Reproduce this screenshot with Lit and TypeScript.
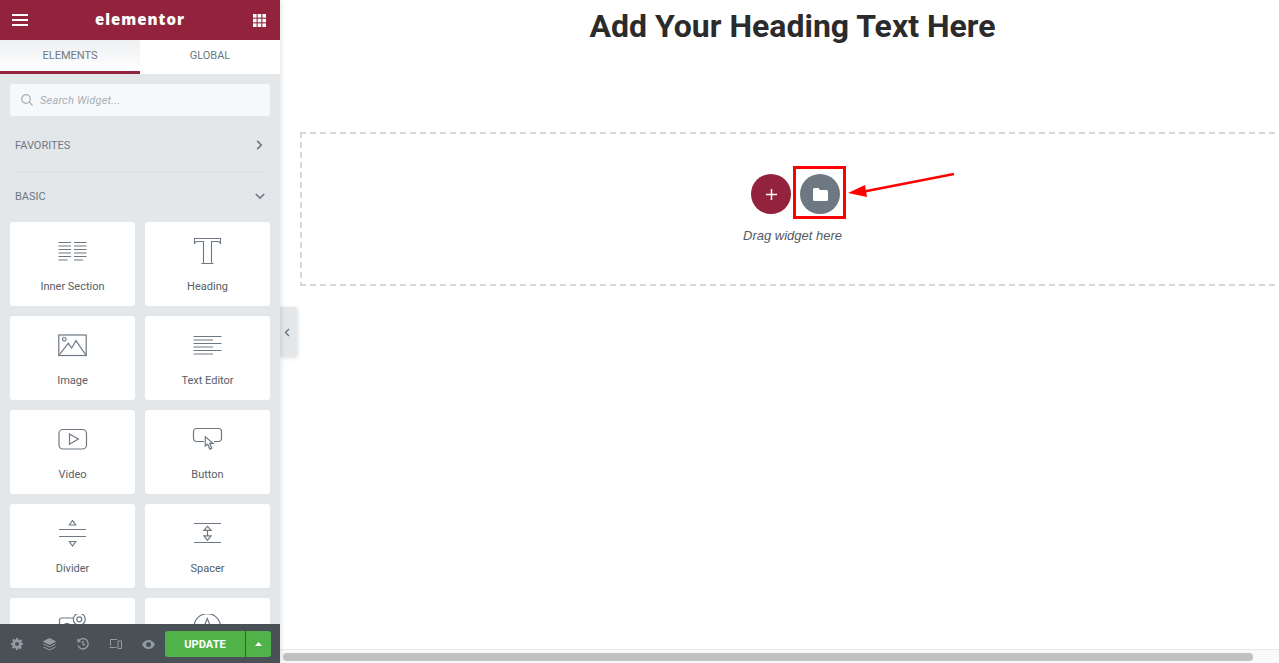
import { LitElement, html, css, svg } from "lit";
import { customElement } from "lit/decorators.js";

const s = "#6d7882";
const rowsY = [4.5, 8, 11.5, 15, 18.5];
const icons: Record<string, unknown> = {
  inner: svg`<g stroke="${s}" stroke-width="1.200" fill="none">${rowsY.map((y) => svg`<path d="M14.500 ${y}h12.500M30 ${y}h12.500"/>`)}<path d="M14.500 22h9M30 22h9"/></g>`,
  heading: svg`<path d="M15.500 6V.5h26V6M15.500 6c0-2 1-2.500 3-2.500h6v22h-2M41.500 6c0-2-1-2.500-3-2.500h-6v22h2M22.500 25.500h12" fill="none" stroke="${s}" stroke-width="1.100"/>`,
  image: svg`<g fill="none" stroke="${s}" stroke-width="1.200"><rect x="14.800" y="3" width="27.400" height="20.500"/><circle cx="20.300" cy="7.300" r="1.800"/><path d="M14.800 23.500l9.500-12.200 3.400 4.700 4.300-7.300 10.200 14.800"/></g>`,
  text: svg`<g stroke="${s}" stroke-width="1.200" fill="none"><path d="M14.500 4.500h28M14.500 8h19.500M14.500 11.500h28M14.500 15h19.500M14.500 18.500h28M14.500 22h19.500"/></g>`,
  video: svg`<g fill="none" stroke="${s}" stroke-width="1.200"><rect x="15" y="3.500" width="27.500" height="19.500" rx="4"/><path d="M25.500 8v10.200l8.800-5.100z"/></g>`,
  button: svg`<g fill="none" stroke="${s}" stroke-width="1.200"><path d="M25 15.500h-7.500a3 3 0 0 1-3-3v-7a3 3 0 0 1 3-3h22a3 3 0 0 1 3 3v7a3 3 0 0 1-3 3H35"/><path d="M26.300 10.800v9.200l2.400-1.900 2.100 5 2-.9-2.100-4.900h3.400z" fill="#fff"/></g>`,
  divider: svg`<g fill="none" stroke="${s}" stroke-width="1.200"><path d="M15 9.500h27M15 16.500h27M25.300 5l3.200-4.500 3.200 4.500zM25.300 21.500l3.200 4.500 3.200-4.500z"/></g>`,
  spacer: svg`<g fill="none" stroke="${s}" stroke-width="1.200"><path d="M15 3.500h27M15 22.500h27M28.500 6.300l-3.600 4h7.200zM28.500 20.300l-3.600-4.500h7.200zM28.500 10.300v5.500"/></g>`,
  social: svg`<g fill="none" stroke="${s}" stroke-width="1.200"><path d="M29.500 4H17.500a2 2 0 0 0-2 2v10"/><path d="M21 9.500h3.500v7M21 9.500v2.500h3.500"/><circle cx="35.300" cy="5.300" r="6"/><circle cx="35.300" cy="5.300" r="2.500"/></g>`,
  star: svg`<g fill="none" stroke="${s}" stroke-width="1.200"><circle cx="28.300" cy="13" r="13.300"/><path d="M28.300 4.500l-4 10h8z"/></g>`,
};

const widgets = [
  ["Inner Section", "inner"],
  ["Heading", "heading"],
  ["Image", "image"],
  ["Text Editor", "text"],
  ["Video", "video"],
  ["Button", "button"],
  ["Divider", "divider"],
  ["Spacer", "spacer"],
  ["", "social"],
  ["", "star"],
] as const;

@customElement("app-root")
export class AppRoot extends LitElement {
  static styles = css`
    :host { display: block; width: 1279px; height: 663px; overflow: hidden; position: relative; background: #fff; font-family: Roboto, "Liberation Sans", sans-serif; }
    * { box-sizing: border-box; }
    .page { display: flex; height: 663px; }
    .panel { width: 280px; height: 663px; flex: none; background: #e4e7ea; display: flex; flex-direction: column; position: relative; box-shadow: 1px 0 5px rgba(0,0,0,.12); z-index: 2; }
    .top { height: 40px; flex: none; background: #93223c; display: flex; align-items: center; justify-content: space-between; padding: 0 14px 0 12px; color: #fff; }
    .logo { font-family: "Open Sans", Roboto, sans-serif; font-size: 15px; font-weight: 800; letter-spacing: 1px; line-height: 36px; padding-bottom: 2px; margin-left: -1px; }
    .tabs { height: 34px; flex: none; display: flex; background: #fff; }
    .tab { flex: 1; text-align: center; font-size: 11px; line-height: 31px; color: #6d7882; }
    .tab.on { background: linear-gradient(#edeff1, #fff); border-bottom: 3px solid #93223c; }
    .scroll { flex: 1; min-height: 0; overflow: hidden; padding: 10px 10px 0; }
    .search { height: 32px; background: #f7f8fa; border-radius: 3px; display: flex; align-items: center; gap: 7px; padding-left: 11px; font-size: 11px; letter-spacing: .2px; font-style: italic; color: #a4afb7; }
    .cat { display: flex; justify-content: space-between; align-items: center; padding: 0 5px; font-size: 11px; color: #6d7882; height: 14px; }
    .cat.fav { margin-top: 22px; }
    .rule { height: 2px; background: #dfe2e5; margin: 19px 5px 0 5px; }
    .cat.basic { margin-top: 16px; }
    .grid { display: grid; grid-template-columns: 125px 125px; grid-auto-rows: 84px; gap: 10px; margin-top: 19px; }
    .card { background: #fff; border-radius: 3px; display: flex; flex-direction: column; align-items: center; position: relative; }
    .ico { display: block; width: 57px; height: 30px; margin-top: 16px; }
    .label { position: absolute; top: 58px; left: 0; right: 0; text-align: center; font-size: 11px; line-height: 13px; color: #556068; }
    .foot { position: absolute; left: 0; right: 0; bottom: 0; height: 39px; background: #495157; display: flex; align-items: center; padding-top: 1px; }
    .tool { width: 33px; height: 38px; display: flex; align-items: center; justify-content: center; flex: none; }
    .tools { display: flex; width: 165px; }
    .update { height: 26px; width: 106px; display: flex; background: #4fb34a; border-radius: 3px; color: #fff; }
    .update b { width: 81px; text-align: center; font-size: 11px; font-weight: 700; line-height: 27px; letter-spacing: .1px; border-right: 1px solid #495157; }
    .update i { flex: 1; display: flex; align-items: center; justify-content: center; }
    .handle { position: absolute; left: 280px; top: 307px; width: 17px; height: 50px; padding-right: 3px; background: #e4e7ea; border-radius: 0 3px 3px 0; box-shadow: 1px 1px 4px rgba(0,0,0,.12); display: flex; align-items: center; justify-content: center; z-index: 1; }
    .main { flex: 1; min-width: 0; position: relative; display: flex; flex-direction: column; overflow: hidden; }
    .content { width: 985px; margin-left: 20px; flex: none; }
    h1 { margin: 0; height: 132px; padding-top: 8px; text-align: center; font-size: 32px; line-height: 36px; font-weight: 700; color: #2b2b2b; white-space: nowrap; }
    .drop {
      height: 154px; display: flex; flex-direction: column; align-items: center; padding-top: 42px;
      background-image:
        repeating-linear-gradient(90deg, #d5d8dc 0 6px, transparent 6px 9.99px),
        repeating-linear-gradient(90deg, #d5d8dc 0 6px, transparent 6px 9.99px),
        repeating-linear-gradient(180deg, #d5d8dc 0 6px, transparent 6px 10px);
      background-size: 975px 2px, 975px 2px, 2px 154px;
      background-position: 0 0, 0 100%, 0 0;
      background-repeat: no-repeat;
    }
    .btns { display: flex; gap: 9px; margin-left: 6px; }
    .round { width: 40px; height: 40px; border-radius: 50%; display: flex; align-items: center; justify-content: center; }
    .add { background: #93223c; }
    .tpl { background: #6d7882; }
    .hint { margin-top: 14px; font-size: 13px; font-style: italic; line-height: 15px; color: #54595f; font-family: "Liberation Sans", Arial, sans-serif; }
    .bar { margin-top: auto; height: 14px; background: #fafafa; border-top: 1px solid #e8e8e8; padding: 3px 0 0 3px; }
    .thumb { width: 970px; height: 8px; border-radius: 4px; background: #c1c1c1; }
    .redbox { position: absolute; left: 513px; top: 166px; width: 53px; height: 53px; border: 3px solid #f00; }
    .arrow { position: absolute; left: 559px; top: 160px; }
  `;

  render() {
    return html`
      <div class="page">
        <aside class="panel">
          <header class="top">
            <svg width="16" height="12" viewBox="0 0 16 12"><path d="M0 0h16v2H0zM0 5h16v2H0zM0 10h16v2H0z" fill="#fff"/></svg>
            <span class="logo">elementor</span>
            <svg width="13" height="13" viewBox="0 0 13 13" fill="#fff">${[0, 4.7, 9.4].map((y) => [0, 4.7, 9.4].map((x) => svg`<rect x="${x}" y="${y}" width="3.600" height="3.600"/>`))}</svg>
          </header>
          <nav class="tabs"><div class="tab on">ELEMENTS</div><div class="tab">GLOBAL</div></nav>
          <div class="scroll">
            <div class="search">
              <svg width="12" height="12" viewBox="0 0 12 12" fill="none" stroke="#a4afb7" stroke-width="1.200"><circle cx="5" cy="5" r="4.300"/><path d="M8.200 8.200l3.300 3.300"/></svg>
              <span>Search Widget...</span>
            </div>
            <div class="cat fav"><span>FAVORITES</span><svg width="10" height="10" viewBox="0 0 10 10" fill="none" stroke="#6d7882" stroke-width="1.700"><path d="M2.200 .9l4 4.100-4 4.100"/></svg></div>
            <div class="rule"></div>
            <div class="cat basic"><span>BASIC</span><svg width="10" height="10" viewBox="0 0 10 10" fill="none" stroke="#6d7882" stroke-width="1.700"><path d="M.8 3l4.200 4 4.200-4"/></svg></div>
            <div class="grid">
              ${widgets.map(([name, icon]) => html`<div class="card"><svg class="ico" viewBox="0 0 57 30">${icons[icon]}</svg><div class="label">${name}</div></div>`)}
            </div>
          </div>
          <footer class="foot">
            <div class="tools">
              <div class="tool"><svg width="12" height="12" viewBox="0 0 24 24" fill="#939ca3"><path fill-rule="evenodd" d="M10 0h4l.6 3.300 2.300 1 2.800-1.900 2.800 2.800-1.900 2.800 1 2.300L24 10v4l-3.300.6-1 2.300 1.900 2.800-2.800 2.800-2.800-1.900-2.300 1L14 24h-4l-.6-3.300-2.300-1-2.800 1.900-2.800-2.800 1.900-2.800-1-2.300L0 14v-4l3.300-.6 1-2.300-1.900-2.800 2.800-2.800 2.800 1.900 2.300-1zM12 8a4 4 0 1 0 0 8 4 4 0 0 0 0-8z"/></svg></div>
              <div class="tool"><svg width="13" height="13" viewBox="0 0 13 13" fill="none" stroke="#939ca3" stroke-width="1"><path d="M6.500 .5l6 3-6 3-6-3z" fill="#939ca3"/><path d="M.5 6l6 3 6-3M.5 9l6 3 6-3"/></svg></div>
              <div class="tool"><svg width="12" height="12" viewBox="0 0 12 12" fill="none" stroke="#939ca3" stroke-width="1.400"><path d="M1.500 3A5.200 5.200 0 1 1 1 7.500M1 .8v2.700h2.700M6 3v3.200l2 1.300"/></svg></div>
              <div class="tool"><svg width="13" height="10" viewBox="0 0 13 10" fill="none" stroke="#939ca3" stroke-width="1"><path d="M8 .5H1.500v6.500M.5 8.500h7M9 2h3.500v7.500H9z"/></svg></div>
              <div class="tool"><svg width="13" height="9" viewBox="0 0 13 9"><path fill-rule="evenodd" d="M0 4.500C1.500 1.500 4 0 6.500 0S11.500 1.500 13 4.500C11.500 7.500 9 9 6.500 9S1.500 7.500 0 4.500zM6.500 2a2.500 2.500 0 1 0 0 5 2.500 2.500 0 0 0 0-5z" fill="#939ca3"/></svg></div>
            </div>
            <div class="update"><b>UPDATE</b><i><svg width="7" height="4" viewBox="0 0 7 4"><path d="M3.500 0L7 4H0z" fill="#fff"/></svg></i></div>
          </footer>
        </aside>
        <main class="main">
          <div class="content">
            <h1>Add Your Heading Text Here</h1>
            <section class="drop">
              <div class="btns">
                <div class="round add"><svg width="11" height="11" viewBox="0 0 12 12"><path d="M5.200 0h1.600v5.200H12v1.600H6.800V12H5.200V6.800H0V5.200h5.200z" fill="#fff"/></svg></div>
                <div class="round tpl"><svg width="15" height="13" viewBox="0 0 15 13"><path d="M1.500 0h4l1.500 2h6.500A1.500 1.500 0 0 1 15 3.500v8a1.500 1.500 0 0 1-1.500 1.500h-12A1.500 1.500 0 0 1 0 11.500v-10A1.500 1.500 0 0 1 1.500 0z" fill="#fff"/></svg></div>
              </div>
              <div class="hint">Drag widget here</div>
            </section>
          </div>
          <div class="bar"><div class="thumb"></div></div>
          <div class="redbox"></div>
          <svg class="arrow" width="120" height="50" viewBox="0 0 120 50"><path d="M115 14L20 32.500" stroke="#f00" stroke-width="2.500" fill="none"/><path d="M9 33l17-8 2 12z" fill="#f00"/></svg>
        </main>
        <div class="handle"><svg width="6" height="9" viewBox="0 0 6 9" fill="none" stroke="#6d7882" stroke-width="1.500"><path d="M5 1L1.500 4.500 5 8"/></svg></div>
      </div>
    `;
  }
}
